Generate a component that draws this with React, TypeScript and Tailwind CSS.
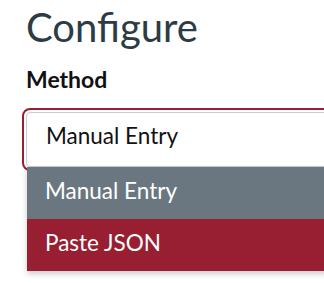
import React from "react";

const options = [
  { id: "manual", label: "Manual Entry", active: true },
  { id: "json", label: "Paste JSON", active: false },
];

export default function App() {
  return (
    <div className="relative h-[283px] w-[324px] overflow-hidden bg-white pl-[26px] pt-[2px] font-['Lato','Liberation_Sans',sans-serif]">
      <h1 className="text-[40px] leading-[50px] font-normal text-[#2d3b45]">Configure</h1>

      <label className="mt-[12px] block text-[23px] leading-[30px] font-bold text-[#111]">Method</label>

      <div className="relative mt-[18px]">
        <div className="h-[55px] w-[340px] rounded-[4px] border border-[#c7cdd1] bg-white pl-[19px] pt-[8px] text-[22.5px] leading-[30px] text-[#111] outline-2 outline-offset-2 outline-[#981e32] outline-solid">
          Manual Entry
        </div>

        <ul className="absolute left-[1px] top-[55px] w-[340px] shadow-[0_3px_6px_rgba(0,0,0,0.2)]">
          {options.map((opt) => (
            <li
              key={opt.id}
              className={
                opt.active
                  ? "flex h-[52px] items-center bg-[#6b7780] pb-[5px] pl-[18px] text-[22.5px] leading-[30px] text-white"
                  : "flex h-[52px] items-center bg-[#981e32] pb-[5px] pl-[18px] text-[22.5px] leading-[30px] text-white"
              }
            >
              {opt.label}
            </li>
          ))}
        </ul>
      </div>
    </div>
  );
}
